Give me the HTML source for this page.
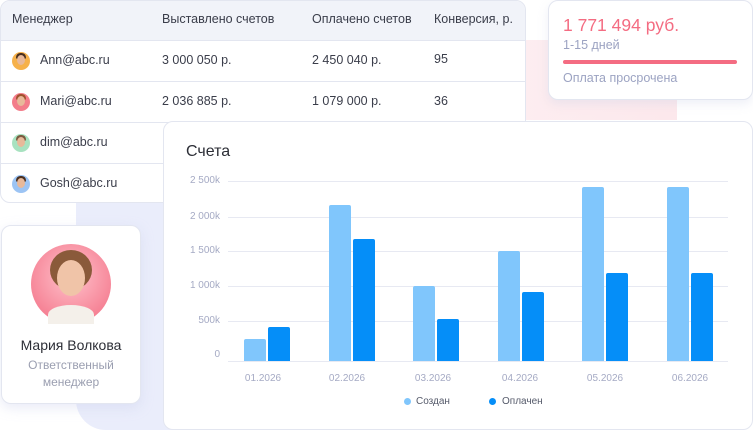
<!DOCTYPE html>
<html><head><meta charset="utf-8"><style>
*{margin:0;padding:0;box-sizing:border-box}
body{width:753px;height:430px;background:#fff;position:relative;overflow:hidden;font-family:"Liberation Sans",sans-serif;color:#333}
.abs{position:absolute}
.t{position:absolute;font-size:12.5px;color:#3a3d4a;white-space:nowrap}
.av{position:absolute;left:12px;width:18px;height:18px;border-radius:50%}
.av i{position:absolute;left:5px;top:3px;width:8px;height:10px;border-radius:50%;background:#e8b99a}
.av b{position:absolute;left:4px;top:1px;width:10px;height:6px;border-radius:5px 5px 2px 2px;background:#4a3020}
.yl{position:absolute;width:40px;text-align:right;left:180px;font-size:10px;color:#a5aac4}
.gl{position:absolute;left:228px;width:500px;height:1px;background:#e7e9f2}
.bar{position:absolute;width:22px;border-radius:2px 2px 0 0}
.xl{position:absolute;font-size:10px;color:#a5aac4;width:60px;text-align:center}
</style></head><body>
<div class="abs" style="left:365px;top:40px;width:312px;height:80px;background:linear-gradient(90deg,#fff 0%,#fdeef1 40%,#fce8ec 100%)"></div>
<div class="abs" style="left:76px;top:195px;width:200px;height:235px;background:#eaedfb;border-radius:0 0 0 30px"></div>
<div class="abs" style="left:0;top:0;width:526px;height:203px;border:1px solid #e3e6f0;border-radius:10px;background:#fff;overflow:hidden">
<div class="abs" style="left:0;top:0;width:526px;height:40px;background:#f1f3f9;border-bottom:1px solid #e3e6f0"></div>
<div class="abs" style="left:0;top:80px;width:526px;height:1px;background:#e3e6f0"></div>
<div class="abs" style="left:0;top:121px;width:526px;height:1px;background:#e3e6f0"></div>
<div class="abs" style="left:0;top:162px;width:526px;height:1px;background:#e3e6f0"></div>
</div>
<div class="t" style="left:12px;top:12px">Менеджер</div>
<div class="t" style="left:162px;top:12px">Выставлено счетов</div>
<div class="t" style="left:312px;top:12px">Оплачено счетов</div>
<div class="t" style="left:434px;top:12px">Конверсия, р.</div>
<div class="av" style="top:52px;background:#f6b14a"><b></b><i></i></div>
<div class="t" style="left:40px;top:53px">Ann@abc.ru</div><div class="t" style="left:162px;top:53px">3 000 050 р.</div><div class="t" style="left:312px;top:53px">2 450 040 р.</div><div class="t" style="left:434px;top:52px">95</div>
<div class="av" style="top:93px;background:#f37d8a"><b style="background:#a0522d"></b><i></i></div>
<div class="t" style="left:40px;top:94px">Mari@abc.ru</div><div class="t" style="left:162px;top:94px">2 036 885 р.</div><div class="t" style="left:312px;top:94px">1 079 000 р.</div><div class="t" style="left:434px;top:94px">36</div>
<div class="av" style="top:134px;background:#a8e2c0"><b style="background:#7a5a40"></b><i></i></div>
<div class="t" style="left:40px;top:135px">dim@abc.ru</div>
<div class="av" style="top:175px;background:#9cc4f4"><b></b><i></i></div>
<div class="t" style="left:40px;top:176px">Gosh@abc.ru</div>

<div class="abs" style="left:548px;top:0;width:205px;height:100px;border:1px solid #e3e6f0;border-radius:10px;background:#fff;box-shadow:0 4px 10px rgba(200,205,230,.3)"></div>
<div class="abs" style="left:563px;top:15px;font-size:17.5px;color:#f46c82">1 771 494 руб.</div>
<div class="abs" style="left:563px;top:38px;font-size:12.5px;color:#9ca3c2">1-15 дней</div>
<div class="abs" style="left:563px;top:60px;width:174px;height:4px;border-radius:2px;background:#f46c82"></div>
<div class="abs" style="left:563px;top:71px;font-size:12.5px;color:#9ca3c2">Оплата просрочена</div>

<div class="abs" style="left:163px;top:121px;width:590px;height:309px;border:1px solid #e3e6f0;border-radius:10px;background:#fff"></div>
<div class="abs" style="left:186px;top:143px;font-size:16px;color:#2c2e36">Счета</div>
<div class="gl" style="top:181px"></div><div class="yl" style="top:175px">2 500k</div>
<div class="gl" style="top:217px"></div><div class="yl" style="top:211px">2 000k</div>
<div class="gl" style="top:251px"></div><div class="yl" style="top:245px">1 500k</div>
<div class="gl" style="top:286px"></div><div class="yl" style="top:280px">1 000k</div>
<div class="gl" style="top:321px"></div><div class="yl" style="top:315px">500k</div>
<div class="gl" style="top:361px"></div><div class="yl" style="top:349px">0</div>
<div class="bar" style="left:244px;top:339px;height:22px;background:#80c6fc"></div><div class="bar" style="left:268px;top:327px;height:34px;background:#058ef8"></div>
<div class="bar" style="left:329px;top:205px;height:156px;background:#80c6fc"></div><div class="bar" style="left:353px;top:239px;height:122px;background:#058ef8"></div>
<div class="bar" style="left:413px;top:286px;height:75px;background:#80c6fc"></div><div class="bar" style="left:437px;top:319px;height:42px;background:#058ef8"></div>
<div class="bar" style="left:498px;top:251px;height:110px;background:#80c6fc"></div><div class="bar" style="left:522px;top:292px;height:69px;background:#058ef8"></div>
<div class="bar" style="left:582px;top:187px;height:174px;background:#80c6fc"></div><div class="bar" style="left:606px;top:273px;height:88px;background:#058ef8"></div>
<div class="bar" style="left:667px;top:187px;height:174px;background:#80c6fc"></div><div class="bar" style="left:691px;top:273px;height:88px;background:#058ef8"></div>
<div class="xl" style="left:233px;top:373px">01.2026</div>
<div class="xl" style="left:317px;top:373px">02.2026</div>
<div class="xl" style="left:403px;top:373px">03.2026</div>
<div class="xl" style="left:490px;top:373px">04.2026</div>
<div class="xl" style="left:575px;top:373px">05.2026</div>
<div class="xl" style="left:660px;top:373px">06.2026</div>
<div class="abs" style="left:404px;top:398px;width:7px;height:7px;border-radius:50%;background:#80c6fc"></div>
<div class="abs" style="left:416px;top:396px;font-size:10px;color:#555a6a">Создан</div>
<div class="abs" style="left:489px;top:398px;width:7px;height:7px;border-radius:50%;background:#058ef8"></div>
<div class="abs" style="left:502px;top:396px;font-size:10px;color:#555a6a">Оплачен</div>

<div class="abs" style="left:1px;top:225px;width:140px;height:179px;border:1px solid #e3e6f0;border-radius:10px;background:#fff;box-shadow:0 4px 12px rgba(200,205,235,.4)"></div>
<div class="abs" style="left:31px;top:244px;width:80px;height:80px;border-radius:50%;background:radial-gradient(circle at 50% 40%,#ffc2cc,#f26a80)"></div>
<div class="abs" style="left:50px;top:250px;width:42px;height:40px;border-radius:50%;background:#8a5a3a"></div>
<div class="abs" style="left:57px;top:260px;width:28px;height:36px;border-radius:50%;background:#f0c4a8"></div>
<div class="abs" style="left:48px;top:305px;width:46px;height:19px;border-radius:50% 50% 0 0;background:#f4f0ea"></div>
<div class="abs" style="left:1px;top:337px;width:140px;text-align:center;font-size:14px;color:#2c2e36">Мария Волкова</div>
<div class="abs" style="left:1px;top:357px;width:140px;text-align:center;font-size:12px;line-height:17px;color:#9a9eb0">Ответственный<br>менеджер</div>
</body></html>
